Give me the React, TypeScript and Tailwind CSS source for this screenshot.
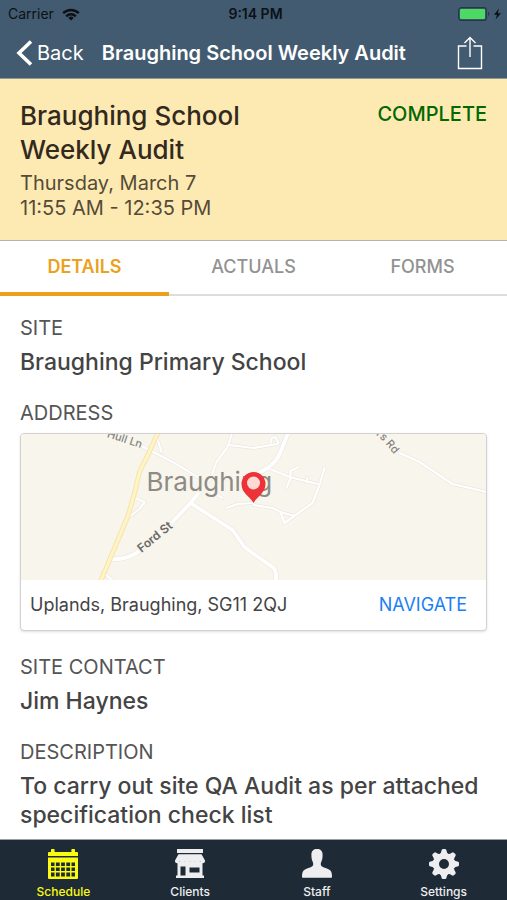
import { useState } from "react";

const tabs = ["DETAILS", "ACTUALS", "FORMS"];

const WifiIcon = () => (
  <svg viewBox="0 0 18 13" className="w-[18px] h-[13px]" fill="none" stroke="#0b1116" strokeWidth="2.4" aria-hidden="true">
    <path d="M1.2 5.2a11 11 0 0 1 15.6 0" />
    <path d="M4.2 8.3a6.8 6.8 0 0 1 9.6 0" />
    <path d="M9 12.6 6.3 9.9a3.8 3.8 0 0 1 5.4 0z" fill="#0b1116" stroke="none" />
  </svg>
);

const BatteryIcon = () => (
  <svg viewBox="0 0 45 14" className="w-[45px] h-[14px]" aria-hidden="true">
    <rect x="0.7" y="0.7" width="27.6" height="12.6" rx="2.6" fill="none" stroke="#24384a" strokeWidth="1.2" />
    <rect x="2" y="2" width="25" height="10" rx="1" fill="#4cd964" />
    <path d="M30 4.8c1.6.6 1.6 3.8 0 4.4z" fill="#24384a" />
    <path d="M41 1.5 36 7.8h3l-1.4 4.7L43 6.2h-3.2z" fill="#0b1116" />
  </svg>
);

const ShareIcon = () => (
  <svg viewBox="0 0 26 34" className="w-[26px] h-[34px]" fill="none" stroke="currentColor" strokeWidth="1.4" aria-hidden="true">
    <path d="M9.5 10H1.5v22.5h23V10h-8" />
    <path d="M13 21V1.5M7.5 7 13 1.5 18.5 7" />
  </svg>
);

const ScheduleIcon = () => (
  <svg viewBox="0 0 30 30" className="w-[30px] h-[30px]" aria-hidden="true">
    <path d="M1 3h2V1.2a1.7 1.7 0 0 1 3.6 0V3h16.8V1.2a1.7 1.7 0 0 1 3.6 0V3h2a1 1 0 0 1 1 1v3H0V4a1 1 0 0 1 1-1z" fill="currentColor" />
    <path
      fillRule="evenodd"
      d="M0 8.4h30V29a1 1 0 0 1-1 1H1a1 1 0 0 1-1-1z M3 13.5V27.5H27V13.5z"
      fill="currentColor"
    />
    <path d="M7.2 13v15M12.4 13v15M17.6 13v15M22.8 13v15M3 17.7h24M3 22.8h24" stroke="currentColor" strokeWidth="1.4" />
  </svg>
);

const ClientsIcon = () => (
  <svg viewBox="0 0 30 29" className="w-[30px] h-[29px]" fill="currentColor" aria-hidden="true">
    <path d="M2 0h26v4H2z" />
    <path d="M3.5 5.2h23L30 11.5a2.5 2.5 0 0 1-5 .6 2.5 2.5 0 0 1-5 0 2.5 2.5 0 0 1-5 0 2.5 2.5 0 0 1-5 0 2.5 2.5 0 0 1-5 0 2.5 2.5 0 0 1-5-.6z" />
    <path fillRule="evenodd" d="M2.5 13h25V26.5H29V29H1v-2.5h1.5z M5.5 17.5v9h5v-9z M14.5 18.5v5h10v-5z" />
  </svg>
);

const StaffIcon = () => (
  <svg viewBox="0 0 30 29" className="w-[30px] h-[29px]" fill="currentColor" aria-hidden="true">
    <path d="M15 0c3.5 0 5.6 2 5.6 5.6 0 3-.2 5.2-1.4 7.4-.7 1.4-.6 3.6.8 4.6 2.2 1.4 6.4 2 8.4 3.9C29.7 22.8 30 25.500 30 28c0 .5-.3.8-.8.8H.8C.3 28.8 0 28.5 0 28c0-2.500.3-5.200 1.600-6.500 2-1.900 6.200-2.500 8.400-3.900 1.400-1 1.500-3.200.8-4.600-1.200-2.200-1.400-4.400-1.400-7.400C9.4 2 11.5 0 15 0z" />
  </svg>
);

const SettingsIcon = () => (
  <svg viewBox="-15 -15 30 30" className="w-[30px] h-[30px]" aria-hidden="true">
    <circle r="8" fill="none" stroke="currentColor" strokeWidth="6" />
    {[0, 45, 90, 135, 180, 225, 270, 315].map((angle) => (
      <path
        key={angle}
        d="M-4.2-10Q-2.8-11-2.5-13.5Q-2.3-15-1-15H1Q2.3-15 2.5-13.5Q2.8-11 4.2-10z"
        transform={`rotate(${angle})`}
        fill="currentColor"
      />
    ))}
  </svg>
);

const roads = [
  "M121 12 129 16 152 28 179 44",
  "M212-2 207 13 196 28 190 45 182 54",
  "M136 2 141 18",
  "M209 11 233 14 257 10M250 9 251 4 255 3 258 9",
  "M247 34 269 43 297 50M278 33 270 37 270 44 266 54M287 44 286 48",
  "M304 34 299 51 292 69 275 81 264 89 260 78 252 74 233 71M260 78 274 82",
  "M206 74 217 70 233 69",
  "M190 57 202 64",
  "M112 63 124 68 119 75 110 82",
  "M82 138 94 148",
  "M379 19 399 28 432 50 466 58",
];

const mainRoads = [
  "M91 125Q104 126 116 119L149 91 170 69 182 54",
  "M170 69 212 96 224 113 232 119 252 133Q257 137 255 148",
  "M268-2 260 18Q256 28 247 34L238 39",
];

const SiteMap = () => (
  <svg
    viewBox="0 0 466 146"
    preserveAspectRatio="xMidYMid slice"
    className="block w-full h-[146px] bg-[#f8f5ed]"
    fontFamily="Inter, sans-serif"
    role="img"
    aria-label="Map of Braughing"
  >
    <g fill="none" strokeLinejoin="round" strokeLinecap="round">
      {roads.map((d) => (
        <path key={d} d={d} stroke="#ebe7df" strokeWidth="3.5" />
      ))}
      {mainRoads.map((d) => (
        <path key={d} d={d} stroke="#ebe7df" strokeWidth="5" />
      ))}
      {roads.map((d) => (
        <path key={d} d={d} stroke="#fff" strokeWidth="2.2" />
      ))}
      {mainRoads.map((d) => (
        <path key={d} d={d} stroke="#fff" strokeWidth="3.8" />
      ))}
      <path d="M138-3Q132 12 119 38 114 62 107 83L79 150" stroke="#f6e3b0" strokeWidth="5" />
      <path d="M138-3Q132 12 119 38 114 62 107 83L79 150" stroke="#fff4c4" strokeWidth="3" />
      <path id="rd-label" d="M347-3Q357 0 363 8L382 30" />
    </g>
    <g stroke="#f8f5ed" strokeWidth="3" paintOrder="stroke">
      <text x="86" y="3" fontSize="11" fontWeight="500" fill="#85827d" transform="rotate(18 86 3)">Hull Ln</text>
      <text fontSize="11" fontWeight="500" fill="#85827d">
        <textPath href="#rd-label">iars Rd</textPath>
      </text>
      <text x="121" y="119" fontSize="12" fontWeight="600" fill="#6b6965" transform="rotate(-39 121 119)">Ford St</text>
      <text x="126" y="57" fontSize="26" fill="#8e8b85">Braughing</text>
    </g>
    <path d="M233 69C230 63 221 59 221 50a12 12 0 0 1 24 0C245 59 236 63 233 69z" fill="#ee3338" />
    <circle cx="233" cy="49" r="6.500" fill="#fcd9d2" />
  </svg>
);

const navItems = [
  { label: "Schedule", icon: ScheduleIcon, active: true },
  { label: "Clients", icon: ClientsIcon, active: false },
  { label: "Staff", icon: StaffIcon, active: false },
  { label: "Settings", icon: SettingsIcon, active: false },
];

const Label = ({ children }: { children: string }) => (
  <h3 className="text-xl leading-6 text-[#555]">{children}</h3>
);

const Value = ({ children }: { children: string }) => (
  <p className="mt-2 text-[23px] leading-[29px] font-medium text-[#444]">{children}</p>
);

export default function App() {
  const [activeTab, setActiveTab] = useState("DETAILS");

  return (
    <div className="min-h-screen flex flex-col bg-white font-[Inter,sans-serif]">
      <header className="bg-[#435b70] border-b border-[#8f998f]">
        <div className="grid grid-cols-3 items-center h-7 pl-2 pr-1 text-sm text-[#0b1116]">
          <div className="flex items-center gap-2">
            <span>Carrier</span>
            <WifiIcon />
          </div>
          <span className="text-center font-semibold">9:14 PM</span>
          <div className="flex justify-end">
            <BatteryIcon />
          </div>
        </div>
        <div className="flex items-center h-[50px] pl-4 pr-6 text-white">
          <button type="button" className="flex items-center gap-1 text-xl">
            <svg viewBox="0 0 17 26" className="w-[17px] h-[26px]" fill="none" stroke="currentColor" strokeWidth="3.6" aria-hidden="true">
              <path d="M15 1.5 3 13 15 24.5" />
            </svg>
            Back
          </button>
          <h1 className="ml-[18px] flex-1 text-xl font-semibold whitespace-nowrap">Braughing School Weekly Audit</h1>
          <button type="button" aria-label="Share">
            <ShareIcon />
          </button>
        </div>
      </header>

      <section className="flex justify-between items-start px-5 pt-5 pb-[19px] bg-[#fdeab3] border-b border-[#b5b3ac]">
        <div>
          <h2 className="max-w-64 text-[26px] leading-[34px] font-medium text-[#33291d]">Braughing School Weekly Audit</h2>
          <p className="mt-1 text-xl leading-[25px] text-[#554b37]">Thursday, March 7</p>
          <p className="text-xl leading-[25px] text-[#554b37]">11:55 AM - 12:35 PM</p>
        </div>
        <span className="text-xl leading-[30px] font-medium text-[#036803]">COMPLETE</span>
      </section>

      <div role="tablist" className="grid grid-cols-3 h-[55px]">
        {tabs.map((tab) => (
          <button
            key={tab}
            type="button"
            role="tab"
            aria-selected={activeTab === tab}
            onClick={() => setActiveTab(tab)}
            className={
              activeTab === tab
                ? "border-b-4 border-[#eba11c] text-lg font-semibold text-[#eba11c]"
                : "border-b-2 border-[#dcdcdc] pb-0.5 text-lg font-medium text-[#929292]"
            }
          >
            {tab}
          </button>
        ))}
      </div>

      <main className="flex-1 px-5 pt-5">
        <section>
          <Label>SITE</Label>
          <Value>Braughing Primary School</Value>
        </section>

        <section className="mt-6">
          <Label>ADDRESS</Label>
          <div className="mt-2 overflow-hidden rounded border border-[#d2d2d2] bg-white shadow">
            <SiteMap />
            <div className="flex items-center justify-between h-[50px] pl-[9px] pr-[19px] text-lg">
              <span className="text-[#444]">Uplands, Braughing, SG11 2QJ</span>
              <a href="#navigate" className="text-[#1a80f5]">NAVIGATE</a>
            </div>
          </div>
        </section>

        <section className="mt-6">
          <Label>SITE CONTACT</Label>
          <Value>Jim Haynes</Value>
        </section>

        <section className="mt-6">
          <Label>DESCRIPTION</Label>
          <Value>To carry out site QA Audit as per attached specification check list</Value>
        </section>
      </main>

      <nav className="sticky bottom-0 grid grid-cols-4 h-[61px] border-t border-[#9a9fa3] bg-[#1e2b36]">
        {navItems.map(({ label, icon: Icon, active }) => (
          <a
            key={label}
            href={`#${label.toLowerCase()}`}
            className={
              active
                ? "flex flex-col items-center gap-[5px] pt-[9px] text-[#fbfb12]"
                : "flex flex-col items-center gap-[5px] pt-[9px] text-[#eeeef0]"
            }
          >
            <span className="h-[30px]">
              <Icon />
            </span>
            <span className="text-xs font-medium">{label}</span>
          </a>
        ))}
      </nav>
    </div>
  );
}
